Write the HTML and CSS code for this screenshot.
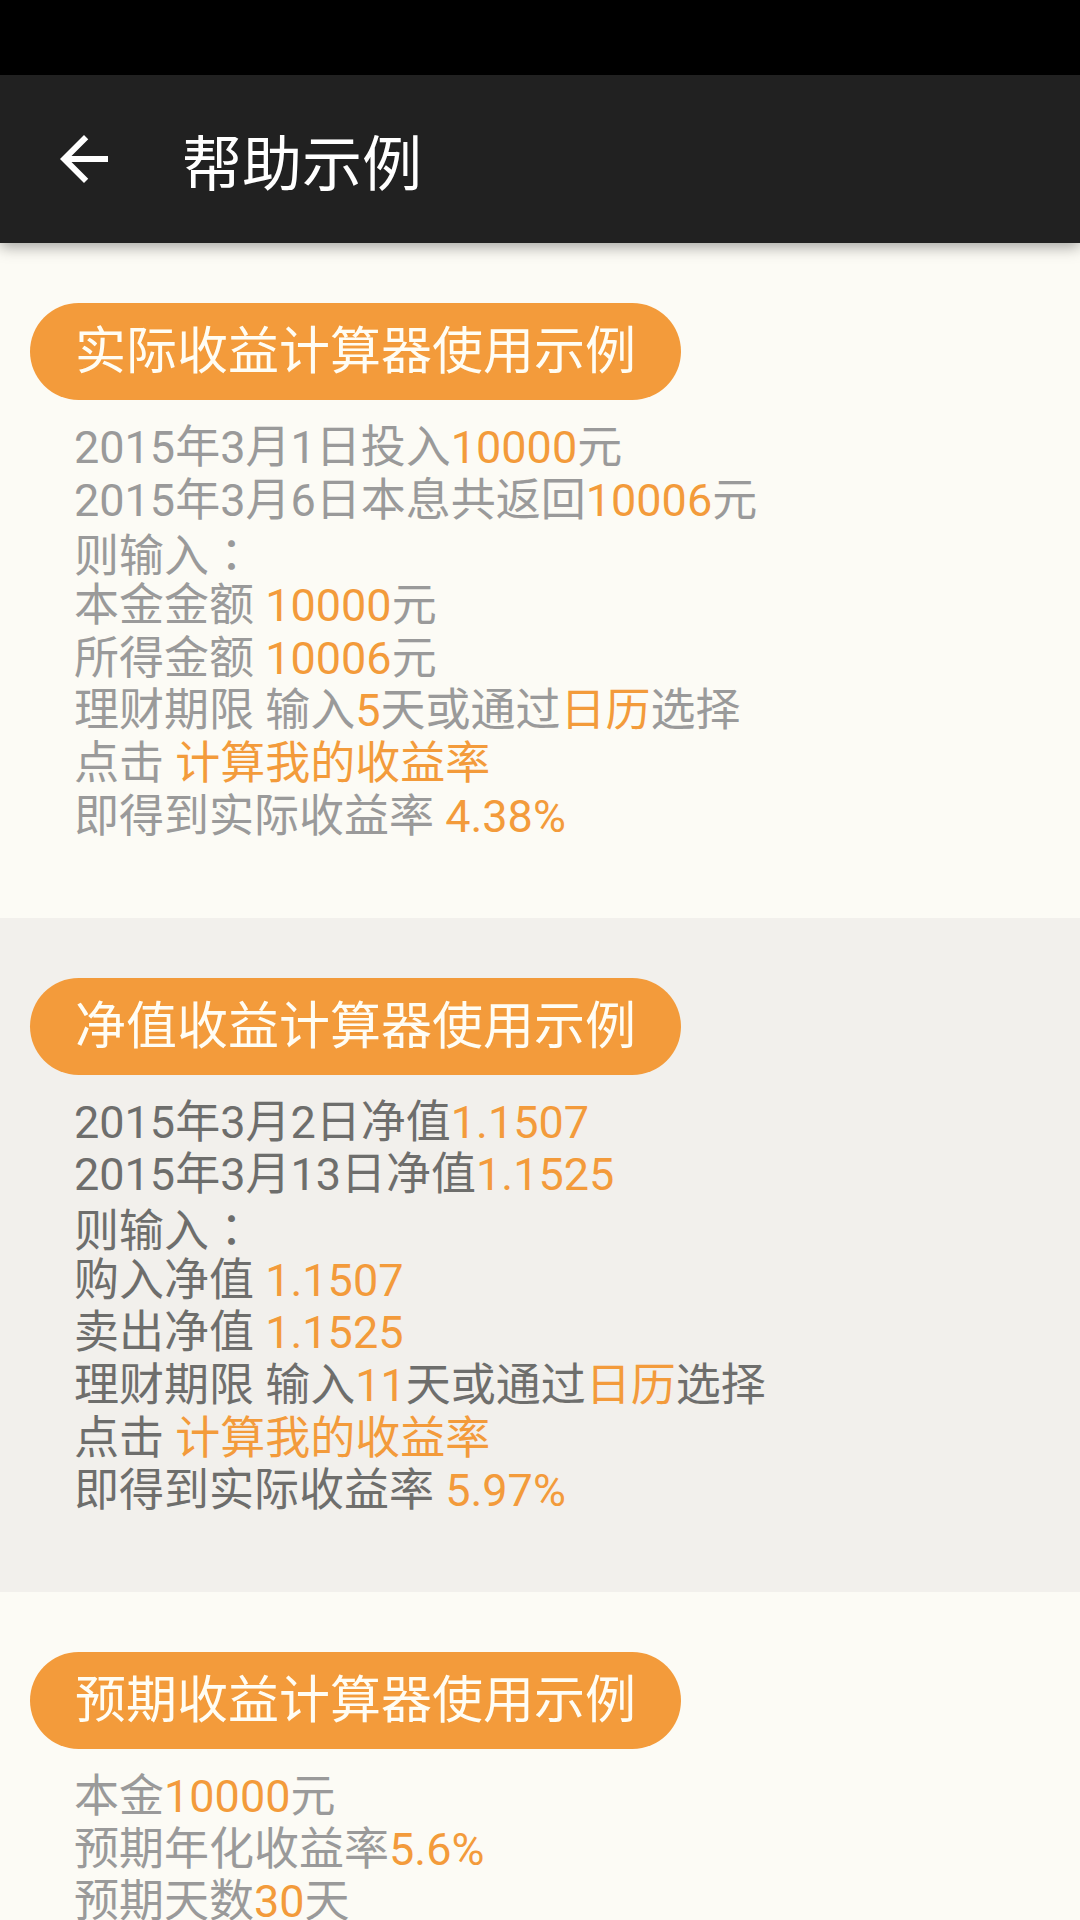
FILE: index.html
```html
<!DOCTYPE html>
<html lang="zh-CN">
<head>
    <meta charset="UTF-8">
    <meta name="viewport" content="width=device-width, initial-scale=1.0">
    <title>帮助示例</title>
    <link rel="stylesheet" href="styles.css">
</head>
<body>
    <div class="status-bar"></div>

    <header class="app-bar">
        <svg class="back-icon" viewBox="0 0 24 24" aria-label="返回">
            <path d="M20 11H7.83l5.59-5.59L12 4l-8 8 8 8 1.41-1.41L7.83 13H20v-2z" fill="#ffffff"/>
        </svg>
        <h1 class="app-title">帮助示例</h1>
    </header>

    <main>
        <!-- 实际收益 -->
        <section class="example">
            <div class="pill">实际收益计算器使用示例</div>
            <div class="lines">
                <p>2015年3月1日投入<span class="hl">10000</span>元</p>
                <p>2015年3月6日本息共返回<span class="hl">10006</span>元</p>
                <p>则输入<span class="colon" lang="ja">：</span></p>
                <p>本金金额 <span class="hl">10000</span>元</p>
                <p>所得金额 <span class="hl">10006</span>元</p>
                <p>理财期限 输入<span class="hl">5</span>天或通过<span class="hl">日历</span>选择</p>
                <p>点击 <span class="hl">计算我的收益率</span></p>
                <p>即得到实际收益率 <span class="hl">4.38%</span></p>
            </div>
        </section>

        <!-- 净值收益 -->
        <section class="example example-alt">
            <div class="pill">净值收益计算器使用示例</div>
            <div class="lines">
                <p>2015年3月2日净值<span class="hl">1.1507</span></p>
                <p>2015年3月13日净值<span class="hl">1.1525</span></p>
                <p>则输入<span class="colon" lang="ja">：</span></p>
                <p>购入净值 <span class="hl">1.1507</span></p>
                <p>卖出净值 <span class="hl">1.1525</span></p>
                <p>理财期限 输入<span class="hl">11</span>天或通过<span class="hl">日历</span>选择</p>
                <p>点击 <span class="hl">计算我的收益率</span></p>
                <p>即得到实际收益率 <span class="hl">5.97%</span></p>
            </div>
        </section>

        <!-- 预期收益 -->
        <section class="example">
            <div class="pill">预期收益计算器使用示例</div>
            <div class="lines">
                <p>本金<span class="hl">10000</span>元</p>
                <p>预期年化收益率<span class="hl">5.6%</span></p>
                <p>预期天数<span class="hl">30</span>天</p>
            </div>
        </section>
    </main>
</body>
</html>
```

FILE: styles.css
```css
:root {
    --orange: #f39b3b;
    --cream: #fcfbf5;
    --grey-bg: #f2f0ec;
    --text-light: #9a9a9a;
    --text-dark: #6e6e6c;
    --bar: #212121;
}

body {
    margin: 0;
    background-color: var(--cream);
    font-family: Roboto, "Noto Sans CJK SC", sans-serif;
    overflow: hidden;
}

.status-bar {
    height: 75px;
    background: #000000;
}

.app-bar {
    position: relative;
    z-index: 1;
    height: 168px;
    display: flex;
    align-items: center;
    background: var(--bar);
    box-shadow: 0 4px 14px rgba(0, 0, 0, 0.35);
}

.back-icon {
    width: 72px;
    height: 72px;
    margin-left: 48px;
}

.app-title {
    margin: 0 0 0 62px;
    font-size: 60px;
    font-weight: 400;
    color: #ffffff;
}

.example {
    padding: 60px 0 74px;
}

.example-alt {
    background: var(--grey-bg);
}

.pill {
    display: inline-block;
    margin-left: 30px;
    padding: 0 45px;
    height: 97px;
    line-height: 97px;
    border-radius: 49px;
    background: var(--orange);
    color: #fffdf4;
    font-size: 51px;
    white-space: nowrap;
}

.lines {
    margin-top: 22px;
    padding-left: 74px;
    font-size: 45px;
    color: var(--text-light);
}

.example-alt .lines {
    color: var(--text-dark);
}

.lines p {
    margin: 0;
    height: 52.7px;
    line-height: 52.7px;
    white-space: nowrap;
}

/* 全角冒号居中显示 */
.colon {
    font-family: "Noto Sans CJK JP", sans-serif;
}

.hl {
    color: var(--orange);
}
```
